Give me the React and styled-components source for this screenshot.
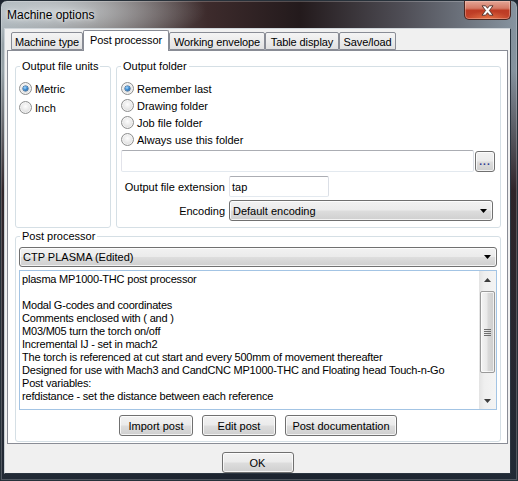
import React from 'react';
import styled, { createGlobalStyle } from 'styled-components';

const GlobalStyle = createGlobalStyle`
  html, body { margin: 0; padding: 0; background: #1d2530; }
  body { font-family: "Liberation Sans", Arial, sans-serif; font-size: 11px; color: #000; }
  * { box-sizing: border-box; }
`;

// window frame (aero glass)
const Window = styled.div`
  width: 518px;
  height: 481px;
  display: flex;
  flex-direction: column;
  border: 1px solid #27313a;
  border-radius: 7px 7px 0 0;
  overflow: hidden;
  background:
    radial-gradient(ellipse 150px 36px at 55px 10px, rgba(225, 232, 236, 0.7), rgba(225, 232, 236, 0) 100%),
    linear-gradient(180deg, rgba(0, 0, 0, 0) 0px, rgba(0, 0, 0, 0) 70px, rgba(40, 27, 31, 0.92) 190px, rgba(27, 36, 48, 0.95) 100%),
    linear-gradient(90deg, #97a2a8 0%, #75706f 20%, #3d2b2c 40%, #231a1c 58%, #4f4e56 78%, #8794a0 100%);
  box-shadow: inset 0 0 0 1px rgba(255, 255, 255, 0.22);
`;

const TitleBar = styled.div`
  height: 27px;
  display: flex;
  justify-content: space-between;
  align-items: flex-start;
  padding-left: 6px;
`;

const Title = styled.div`
  margin-top: 7px;
  font-size: 12px;
  line-height: 14px;
  color: #000;
  text-shadow: 0 0 6px rgba(255, 255, 255, 0.9), 0 0 3px rgba(255, 255, 255, 0.7);
`;

const CloseButton = styled.div`
  width: 47px;
  height: 19px;
  margin-right: 6px;
  display: flex;
  align-items: center;
  justify-content: center;
  border: 1px solid #4a2620;
  border-top: none;
  border-radius: 0 0 5px 5px;
  background:
    radial-gradient(ellipse 22px 8px at 50% 100%, rgba(255, 150, 90, 0.55), rgba(255, 150, 90, 0) 100%),
    linear-gradient(180deg, #e3a596 0%, #d47a66 40%, #bd3b24 52%, #c3452c 100%);
  box-shadow: inset 0 0 0 1px rgba(255, 220, 210, 0.35);
`;

const Client = styled.div`
  margin: 0 6px 0 3px;
  height: 446px;
  display: flex;
  flex-direction: column;
  background: #f0f0f0;
  border: 1px solid;
  border-color: #cfd5da #2b3540 #2b3540 #c9d0d5;
`;

const TabRow = styled.div`
  height: 21px;
  display: flex;
  align-items: flex-end;
  padding-left: 6px;
`;

const Tab = styled.div`
  position: relative;
  width: ${p => p.w}px;
  height: ${p => (p.active ? 21 : 18)}px;
  margin-bottom: ${p => (p.active ? -1 : 0)}px;
  z-index: ${p => (p.active ? 2 : 1)};
  padding-top: 3px;
  line-height: 13px;
  text-align: center;
  white-space: nowrap;
  letter-spacing: -0.1px;
  border: 1px solid #898c95;
  border-bottom: ${p => (p.active ? 'none' : '1px solid #898c95')};
  border-radius: 2px 2px 0 0;
  background: ${p => (p.active ? '#fff' : 'linear-gradient(180deg, #f4f4f4 0%, #ececec 50%, #e1e1e1 100%)')};
`;

const Panel = styled.div`
  margin: 0 2px;
  height: 394px;
  display: flex;
  flex-direction: column;
  gap: 2px;
  padding: 9px 6px 1px 7px;
  background: #fff;
  border: 1px solid #898c95;
`;

const TopRow = styled.div`
  height: 168px;
  display: flex;
  gap: 5px;
`;

const Group = styled.fieldset`
  margin: 0;
  padding: 0;
  min-width: 0;
  width: ${p => p.w}px;
  height: ${p => p.h}px;
  border: 1px solid #d5dfe5;
  border-radius: 3px;
`;

const Legend = styled.legend`
  margin-left: 4px;
  padding: 0 2px;
  line-height: 13px;
  font-size: 11px;
`;

const GroupBody = styled.div`
  display: flex;
  flex-direction: column;
  padding: ${p => p.pad};
`;

const RadioRow = styled.label`
  height: ${p => p.h}px;
  display: flex;
  align-items: center;
  white-space: nowrap;
`;

const RadioMark = styled.span`
  position: relative;
  width: 13px;
  height: 13px;
  margin-right: 3px;
  border-radius: 50%;
  border: 1px solid #8e8f8f;
  background: radial-gradient(circle at 50% 40%, #fdfdfd 0%, #eaeaea 45%, #cfcfcf 100%);
  box-shadow: inset 0 0 0 1px rgba(255, 255, 255, 0.6);
  flex: none;

  &::after {
    content: '';
    display: ${p => (p.checked ? 'block' : 'none')};
    position: absolute;
    left: 3px;
    top: 3px;
    width: 5px;
    height: 5px;
    border-radius: 50%;
    background: radial-gradient(circle at 40% 35%, #a9dcff 0%, #3c8ad0 45%, #1a4f86 100%);
    box-shadow: 0 0 0 0.5px #24507e;
  }
`;

const FolderRow = styled.div`
  margin-top: 2px;
  display: flex;
  align-items: center;
  gap: 1px;
`;

const TextBox = styled.div`
  width: ${p => p.w}px;
  height: ${p => p.h}px;
  padding: 0 2px;
  display: flex;
  align-items: center;
  background: #fff;
  border: 1px solid;
  border-color: #abadb3 #dbdfe6 #e3e9ef #e2e3ea;
  border-radius: 2px;
`;

const Button = styled.div`
  width: ${p => p.w}px;
  height: ${p => p.h || 21}px;
  display: flex;
  align-items: center;
  justify-content: center;
  white-space: nowrap;
  border: 1px solid #707070;
  border-radius: 3px;
  background: linear-gradient(180deg, #f2f2f2 0%, #ebebeb 48%, #dddddd 52%, #cfcfcf 100%);
  box-shadow: inset 0 0 0 1px rgba(255, 255, 255, 0.75);
`;

const Dots = styled.span`
  color: #2c3590;
  font-weight: bold;
  letter-spacing: 1px;
  margin-top: 1px;
  font-size: 10px;
`;

const FieldGrid = styled.div`
  margin-top: 4px;
  display: grid;
  grid-template-columns: 108px auto;
  row-gap: 3px;
  align-items: center;
`;

const FieldLabel = styled.div`
  padding-right: 4px;
  text-align: right;
  white-space: nowrap;
`;

const Combo = styled.div`
  width: ${p => (p.w ? `${p.w}px` : 'auto')};
  height: ${p => p.h}px;
  display: flex;
  align-items: center;
  justify-content: space-between;
  padding: 0 5px 0 3px;
  border: 1px solid #707070;
  border-radius: 3px;
  background: linear-gradient(180deg, #f2f2f2 0%, #ebebeb 48%, #dddddd 52%, #cfcfcf 100%);
  box-shadow: inset 0 0 0 1px rgba(255, 255, 255, 0.75);
`;

const MemoBox = styled.div`
  margin-top: 3px;
  height: 140px;
  display: flex;
  border: 1px solid #a3c4e4;
  background: #fff;
`;

const MemoText = styled.div`
  flex: 1;
  min-width: 0;
  overflow: hidden;
  padding: 2px 2px 0;
  line-height: 13px;
  letter-spacing: -0.2px;
  white-space: pre;
`;

const ScrollBar = styled.div`
  width: 17px;
  display: flex;
  flex-direction: column;
  background: linear-gradient(90deg, #e3e3e3 0%, #efefef 30%, #f4f4f4 100%);
`;

const ScrollArrow = styled.div`
  height: 17px;
  display: flex;
  align-items: center;
  justify-content: center;
`;

const ScrollTrack = styled.div`
  flex: 1;
  padding: 3px 1px 0 1px;
`;

const Thumb = styled.div`
  height: 82px;
  display: flex;
  align-items: center;
  justify-content: center;
  border: 1px solid #9a9a9a;
  border-radius: 2px;
  background: linear-gradient(90deg, #f4f4f4 0%, #e9e9e9 45%, #d9d9d9 55%, #cdcdcd 100%);
  box-shadow: inset 0 0 0 1px rgba(255, 255, 255, 0.7);
`;

const ButtonRow = styled.div`
  margin-top: 5px;
  display: flex;
  justify-content: center;
  gap: 9px;
`;

const Footer = styled.div`
  flex: 1;
  display: flex;
  justify-content: center;
  padding-top: 8px;
`;

const Arrow = () => (
  <svg width="7" height="4" viewBox="0 0 7 4">
    <path d="M0 0 H7 L3.5 4 Z" fill="#000" />
  </svg>
);

const tabs = [
  { label: 'Machine type', w: 72 },
  { label: 'Post processor', w: 86, active: true },
  { label: 'Working envelope', w: 96 },
  { label: 'Table display', w: 74 },
  { label: 'Save/load', w: 57 },
];

const folderOptions = ['Remember last', 'Drawing folder', 'Job file folder', 'Always use this folder'];

const memoLines = [
  'plasma MP1000-THC post processor',
  '',
  'Modal G-codes and coordinates',
  'Comments enclosed with ( and )',
  'M03/M05 turn the torch on/off',
  'Incremental IJ - set in mach2',
  'The torch is referenced at cut start and every 500mm of movement thereafter',
  'Designed for use with Mach3 and CandCNC MP1000-THC and Floating head Touch-n-Go',
  'Post variables:',
  'refdistance - set the distance between each reference',
];

export default function App() {
  return (
    <>
      <GlobalStyle />
      <Window>
        <TitleBar>
          <Title>Machine options</Title>
          <CloseButton>
            <svg width="13" height="11" viewBox="0 0 13 11">
              <path
                d="M1 0.8 H4.6 L6.5 3.3 L8.4 0.8 H12 L8.4 5.5 L12 10.2 H8.4 L6.5 7.7 L4.6 10.2 H1 L4.6 5.5 Z"
                fill="#fff"
                stroke="#4b2a25"
                strokeWidth="0.9"
                strokeLinejoin="round"
              />
            </svg>
          </CloseButton>
        </TitleBar>

        <Client>
          <TabRow>
            {tabs.map(t => (
              <Tab key={t.label} w={t.w} active={t.active}>
                {t.label}
              </Tab>
            ))}
          </TabRow>

          <Panel>
            <TopRow>
              <Group w={96} h={168}>
                <Legend>Output file units</Legend>
                <GroupBody pad="6px 0 0 3px">
                  <RadioRow h={19}>
                    <RadioMark checked />
                    Metric
                  </RadioRow>
                  <RadioRow h={19}>
                    <RadioMark />
                    Inch
                  </RadioRow>
                </GroupBody>
              </Group>

              <Group w={385} h={168}>
                <Legend>Output folder</Legend>
                <GroupBody pad="7px 5px 0 4px">
                  {folderOptions.map((o, i) => (
                    <RadioRow key={o} h={17}>
                      <RadioMark checked={i === 0} />
                      {o}
                    </RadioRow>
                  ))}
                  <FolderRow>
                    <TextBox w={353} h={22} />
                    <Button w={20}>
                      <Dots>...</Dots>
                    </Button>
                  </FolderRow>
                  <FieldGrid>
                    <FieldLabel>Output file extension</FieldLabel>
                    <TextBox w={100} h={21}>tap</TextBox>
                    <FieldLabel>Encoding</FieldLabel>
                    <Combo w={264} h={21}>
                      Default encoding
                      <Arrow />
                    </Combo>
                  </FieldGrid>
                </GroupBody>
              </Group>
            </TopRow>

            <Group w={486} h={212}>
              <Legend>Post processor</Legend>
              <GroupBody pad="4px 3px 0 3px">
                <Combo h={20}>
                  CTP PLASMA (Edited)
                  <Arrow />
                </Combo>
                <MemoBox>
                  <MemoText>{memoLines.join('\n')}</MemoText>
                  <ScrollBar>
                    <ScrollArrow>
                      <svg width="7" height="4" viewBox="0 0 7 4">
                        <path d="M0 4 L3.5 0 L7 4 Z" fill="#3c3c3c" />
                      </svg>
                    </ScrollArrow>
                    <ScrollTrack>
                      <Thumb>
                        <svg width="7" height="7" viewBox="0 0 7 7">
                          <path d="M0 0.5 H7 M0 2.5 H7 M0 4.5 H7 M0 6.5 H7" stroke="#6e6e6e" strokeWidth="1" />
                        </svg>
                      </Thumb>
                    </ScrollTrack>
                    <ScrollArrow>
                      <svg width="7" height="4" viewBox="0 0 7 4">
                        <path d="M0 0 H7 L3.5 4 Z" fill="#3c3c3c" />
                      </svg>
                    </ScrollArrow>
                  </ScrollBar>
                </MemoBox>
                <ButtonRow>
                  <Button w={74}>Import post</Button>
                  <Button w={74}>Edit post</Button>
                  <Button w={112}>Post documentation</Button>
                </ButtonRow>
              </GroupBody>
            </Group>
          </Panel>

          <Footer>
            <Button w={72}>OK</Button>
          </Footer>
        </Client>
      </Window>
    </>
  );
}
